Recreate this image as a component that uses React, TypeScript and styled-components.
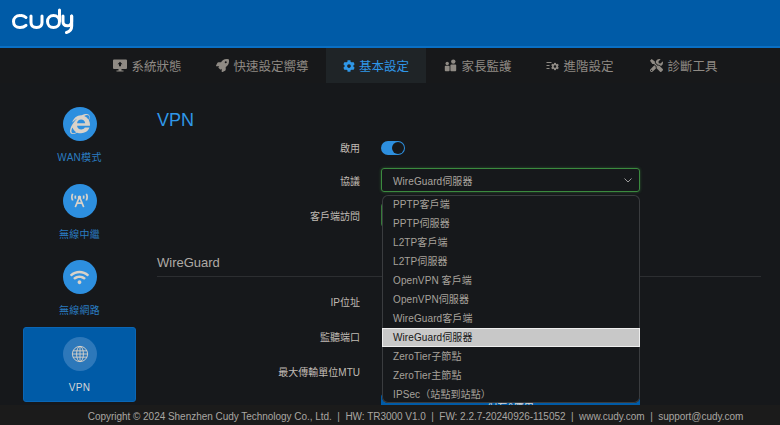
import * as React from 'react';
import styled, { createGlobalStyle } from 'styled-components';
import { FaBroadcastTower, FaCog, FaInternetExplorer, FaRocket, FaTools, FaWifi } from 'react-icons/fa';

const GlobalStyle = createGlobalStyle`
  html, body {
    margin: 0;
    padding: 0;
    height: 100%;
    background: #16181b;
  }
  body {
    font-family: "Liberation Sans", "Noto Sans CJK TC", sans-serif;
    overflow: hidden;
  }
`;

const Page = styled.div`
  width: 780px;
  height: 425px;
  display: flex;
  flex-direction: column;
  overflow: hidden;
`;

const Header = styled.header`
  flex: none;
  height: 38px;
  background: #005ba7;
  border-bottom: 2px solid #0a6fc4;
  padding: 8px 0 0 12px;
`;

const TopNav = styled.nav`
  height: 35px;
  flex: none;
  background: #17181a;
  display: flex;
  padding-left: 96px;
`;

const Tab = styled.a<{ $active?: boolean; $width: number }>`
  width: ${(p) => p.$width}px;
  display: flex;
  align-items: center;
  justify-content: center;
  gap: 4px;
  font-size: 12.5px;
  color: ${(p) => (p.$active ? '#2f97e8' : '#8f8a84')};
  background: ${(p) => (p.$active ? '#1f2427' : 'transparent')};
  svg {
    flex: none;
  }
`;

const Body = styled.div`
  flex: 1;
  min-height: 0;
  display: flex;
  overflow: hidden;
`;

const Sidebar = styled.aside`
  width: 113px;
  flex: none;
  margin-left: 23px;
  padding-top: 14px;
  display: flex;
  flex-direction: column;
  gap: 1.5px;
`;

const SideItem = styled.a<{ $active?: boolean }>`
  height: 75px;
  flex: none;
  box-sizing: border-box;
  display: flex;
  flex-direction: column;
  align-items: center;
  padding-top: 9px;
  border-radius: 3px;
  background: ${(p) => (p.$active ? '#005ba7' : 'transparent')};
  border: 1px solid ${(p) => (p.$active ? '#0a66b5' : 'transparent')};
  color: ${(p) => (p.$active ? '#d6d6d6' : '#2a7cc0')};
  font-size: 10px;
  line-height: 12px;
  letter-spacing: 0.3px;
`;

const IconCircle = styled.span<{ $active?: boolean }>`
  width: 34px;
  height: 34px;
  border-radius: 50%;
  background: ${(p) => (p.$active ? '#2d78ba' : '#2d8fdf')};
  color: #d9d2c9;
  display: flex;
  align-items: center;
  justify-content: center;
  margin-bottom: 11px;
`;

const Main = styled.main`
  flex: 1;
  position: relative;
  margin-left: 21px;
  margin-right: 19px;
  min-width: 0;
`;

const Title = styled.h2`
  margin: 0;
  padding-top: 27px;
  height: 53px;
  box-sizing: border-box;
  font-size: 18px;
  line-height: 20px;
  font-weight: 400;
  color: #2f97e8;
`;

const Row = styled.div<{ $height: number; $top?: number }>`
  height: ${(p) => p.$height}px;
  margin-top: ${(p) => p.$top ?? 0}px;
  display: flex;
  align-items: center;
`;

const Label = styled.label`
  width: 203px;
  flex: none;
  text-align: right;
  font-size: 10px;
  color: #c0bbb4;
`;

const Control = styled.div`
  margin-left: 21px;
  width: 259px;
  display: flex;
  align-items: center;
`;

const Toggle = styled.span`
  width: 24px;
  height: 14px;
  border-radius: 7px;
  background: #2d8fdf;
  position: relative;
  &::after {
    content: '';
    position: absolute;
    right: 1px;
    top: 1px;
    width: 12px;
    height: 12px;
    border-radius: 50%;
    background: #16181b;
  }
`;

const SelectBox = styled.div`
  width: 100%;
  height: 24px;
  box-sizing: border-box;
  border: 1px solid #3b8a3f;
  border-radius: 3px;
  box-shadow: 0 0 3px rgba(70, 170, 70, 0.45);
  padding: 0 7px 0 11px;
  display: flex;
  align-items: center;
  justify-content: space-between;
  font-size: 10px;
  letter-spacing: 0.1px;
  color: #aaa59f;
`;

const GhostInput = styled.div`
  width: 100%;
  height: 24px;
  box-sizing: border-box;
  border: 1px solid #357a39;
  border-radius: 3px;
`;

const SectionTitle = styled.h3`
  margin: 24px 0 0;
  height: 23px;
  font-size: 13px;
  line-height: 20px;
  font-weight: 400;
  color: #aeaaa5;
  border-bottom: 1px solid #2c2e31;
`;

const SaveButton = styled.button`
  display: block;
  margin: 5px 0 0 224px;
  width: 259px;
  height: 24px;
  border: 0;
  border-radius: 3px;
  background: #005ba7;
  color: #d6d6d6;
  font: inherit;
  font-size: 10px;
`;

const Dropdown = styled.ul`
  position: absolute;
  left: 225px;
  top: 112px;
  width: 258px;
  height: 208px;
  margin: 0;
  padding: 0;
  list-style: none;
  background: #16181b;
  border-radius: 6px;
  box-shadow: inset 0 0 0 1px #3a3c3f;
  overflow: hidden;
`;

const Option = styled.li<{ $selected?: boolean }>`
  height: 19px;
  line-height: 20px;
  box-sizing: border-box;
  padding-left: 11px;
  font-size: 10px;
  letter-spacing: 0.1px;
  color: ${(p) => (p.$selected ? '#161616' : '#a7a29c')};
  background: ${(p) => (p.$selected ? '#c8c8c8' : 'transparent')};
  box-shadow: ${(p) => (p.$selected ? 'inset 0 0 0 1px #eeeeee' : 'none')};
`;

const Footer = styled.footer`
  height: 20px;
  flex: none;
  box-sizing: border-box;
  padding-left: 51px;
  background: #1b1b1b;
  color: #a9a6a2;
  font-size: 10px;
  letter-spacing: -0.03px;
  line-height: 23px;
  text-align: center;
  white-space: pre;
  position: relative;
`;

const CudyLogo = () => (
  <svg width="62" height="26" viewBox="0 0 62 26" fill="none" stroke="#fff" strokeWidth="3" strokeLinecap="round">
    <path d="M14 9.500A6.600 6.600 0 0 0 8 7.600C4 7.600 1.500 10 1.500 13.600s2.500 6 6.500 6c2.600 0 4.600-.8 6-2.200" />
    <path d="M19 8v6.500c0 3.200 1.800 5 5.500 5s5.500-1.800 5.500-5V8" />
    <path d="M47.500 2v11.500c0 3.700-2.500 6.100-6 6.100s-6-2.500-6-6 2.500-6 6-6 6 2.400 6 6" />
    <path d="M51 8v5.500c0 2.700 1.600 4.300 4.300 4.300s4.300-1.600 4.300-4.300V8" />
    <path d="M59.700 8v10c0 3.500-1.800 5.600-5.200 6.500" />
  </svg>
);

const DesktopIcon = () => (
  <svg width="14" height="13" viewBox="0 0 14 13" fill="currentColor">
    <path d="M1 0.500h12a1 1 0 0 1 1 1v7.500a1 1 0 0 1-1 1H8.500v1.500H10.500V12.500H3.500V11.500H5.500V10H1a1 1 0 0 1-1-1V1.500a1 1 0 0 1 1-1z" />
    <path d="M7 2.800L9.500 5.300H8V7.300H6V5.300H4.500z" fill="#17181a" />
  </svg>
);

const ParentsIcon = () => (
  <svg width="13" height="13" viewBox="0 0 13 13" fill="currentColor">
    <circle cx="3.200" cy="4.500" r="1.700" />
    <circle cx="9.300" cy="2.600" r="2.200" />
    <rect x="0.800" y="6.800" width="4.800" height="5.400" rx="0.900" />
    <rect x="6.400" y="5.600" width="5.800" height="6.600" rx="0.900" />
  </svg>
);

const AdvancedIcon = () => (
  <svg width="13" height="13" viewBox="0 0 13 13" fill="none" stroke="currentColor" strokeWidth="1">
    <path d="M0.500 3.500h5M0.500 6.500h3M0.500 9.500h3" />
    <g transform="translate(5 3.500)">
      <FaCog size={8} stroke="none" fill="currentColor" />
    </g>
  </svg>
);

const GlobeIcon = () => (
  <svg width="18" height="18" viewBox="0 0 20 20" fill="none" stroke="currentColor" strokeWidth="1">
    <circle cx="10" cy="10" r="8.500" />
    <ellipse cx="10" cy="10" rx="3.800" ry="8.500" />
    <path d="M10 1.500v17M2.200 6.500h15.600M1.500 10h17M2.200 13.500h15.600" />
  </svg>
);

const tabs = [
  { label: '系統狀態', icon: <DesktopIcon />, width: 103 },
  { label: '快速設定嚮導', icon: <FaRocket size={13} />, width: 127 },
  { label: '基本設定', icon: <FaCog size={12} />, width: 100, active: true },
  { label: '家長監護', icon: <ParentsIcon />, width: 104 },
  { label: '進階設定', icon: <AdvancedIcon />, width: 100 },
  { label: '診斷工具', icon: <FaTools size={13} />, width: 108 },
];

const sideItems = [
  { label: 'WAN模式', icon: <FaInternetExplorer size={20} /> },
  { label: '無線中繼', icon: <FaBroadcastTower size={17} /> },
  { label: '無線網路', icon: <FaWifi size={19} /> },
  { label: 'VPN', icon: <GlobeIcon />, active: true },
];

const options = [
  'PPTP客戶端',
  'PPTP伺服器',
  'L2TP客戶端',
  'L2TP伺服器',
  'OpenVPN 客戶端',
  'OpenVPN伺服器',
  'WireGuard客戶端',
  'WireGuard伺服器',
  'ZeroTier子節點',
  'ZeroTier主節點',
  'IPSec（站點到站點）',
];

const App: React.FC = () => {
  return (
    <Page>
      <GlobalStyle />
      <Header>
        <CudyLogo />
      </Header>
      <TopNav>
        {tabs.map((t) => (
          <Tab key={t.label} $active={t.active} $width={t.width}>
            {t.icon}
            {t.label}
          </Tab>
        ))}
      </TopNav>
      <Body>
        <Sidebar>
          {sideItems.map((s) => (
            <SideItem key={s.label} $active={s.active}>
              <IconCircle $active={s.active}>{s.icon}</IconCircle>
              {s.label}
            </SideItem>
          ))}
        </Sidebar>
        <Main>
          <Title>VPN</Title>
          <Row $height={23}>
            <Label>啟用</Label>
            <Control>
              <Toggle />
            </Control>
          </Row>
          <Row $height={42}>
            <Label>協議</Label>
            <Control>
              <SelectBox>
                WireGuard伺服器
                <svg width="8" height="5" viewBox="0 0 8 5" fill="none" stroke="#9a9a9a" strokeWidth="1">
                  <path d="M0.500 0.500L4 4l3.500-3.500" />
                </svg>
              </SelectBox>
            </Control>
          </Row>
          <Row $height={28}>
            <Label>客戶端訪問</Label>
            <Control>
              <GhostInput />
            </Control>
          </Row>
          <SectionTitle>WireGuard</SectionTitle>
          <Row $height={35} $top={7}>
            <Label>IP位址</Label>
          </Row>
          <Row $height={35}>
            <Label>監聽端口</Label>
          </Row>
          <Row $height={35}>
            <Label>最大傳輸單位MTU</Label>
          </Row>
          <SaveButton>保存&應用</SaveButton>
          <Dropdown>
            {options.map((o) => (
              <Option key={o} $selected={o === 'WireGuard伺服器'}>
                {o}
              </Option>
            ))}
          </Dropdown>
        </Main>
      </Body>
      <Footer>Copyright © 2024 Shenzhen Cudy Technology Co., Ltd.  |  HW: TR3000 V1.0  |  FW: 2.2.7-20240926-115052  |  www.cudy.com  |  support@cudy.com</Footer>
    </Page>
  );
};

export default App;
